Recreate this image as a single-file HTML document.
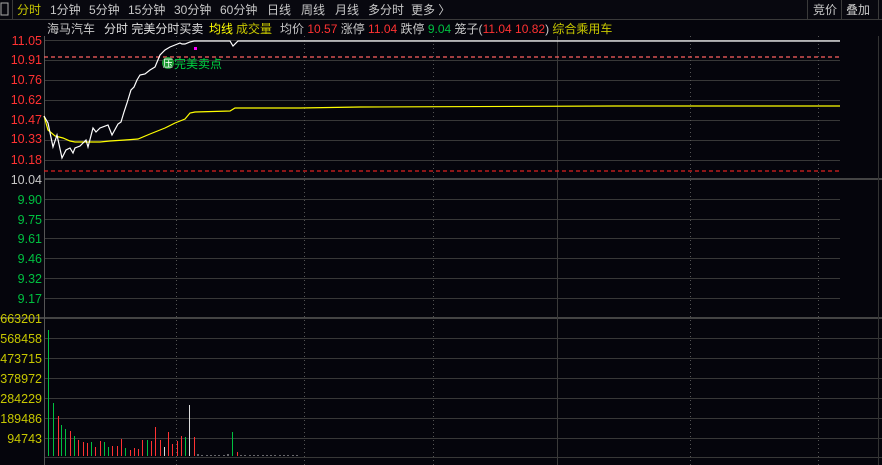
<!DOCTYPE html><html><head><meta charset="utf-8"><style>
body{margin:0;background:#05050c;width:882px;height:465px;overflow:hidden;font-family:"Liberation Sans","Noto Sans CJK SC",sans-serif;}
svg{display:block}
</style></head><body>
<svg width="882" height="465" xmlns="http://www.w3.org/2000/svg" font-family="Liberation Sans, Noto Sans CJK SC, sans-serif" font-size="12">
<rect width="882" height="465" fill="#05050c"/>
<rect x="0" y="0" width="882" height="19" fill="#08080f"/>
<line x1="0" y1="19.5" x2="882" y2="19.5" stroke="#3a3a3a"/>
<rect x="1" y="3" width="7" height="12" fill="none" stroke="#aaa"/>
<line x1="12.5" y1="0" x2="12.5" y2="19" stroke="#3a3a3a"/>
<text x="17" y="14" fill="#c8c800">分时</text>
<text x="50" y="14" fill="#c8c8c8">1分钟</text>
<text x="89" y="14" fill="#c8c8c8">5分钟</text>
<text x="128" y="14" fill="#c8c8c8">15分钟</text>
<text x="174" y="14" fill="#c8c8c8">30分钟</text>
<text x="220" y="14" fill="#c8c8c8">60分钟</text>
<text x="267" y="14" fill="#c8c8c8">日线</text>
<text x="301" y="14" fill="#c8c8c8">周线</text>
<text x="335" y="14" fill="#c8c8c8">月线</text>
<text x="368" y="14" fill="#c8c8c8">多分时</text>
<text x="411" y="14" fill="#c8c8c8">更多 〉</text>
<line x1="807.5" y1="0" x2="807.5" y2="19" stroke="#3a3a3a"/>
<line x1="841.5" y1="0" x2="841.5" y2="19" stroke="#3a3a3a"/>
<line x1="878.5" y1="0" x2="878.5" y2="19" stroke="#3a3a3a"/>
<text x="813" y="14" fill="#c8c8c8">竞价</text>
<text x="846" y="14" fill="#c8c8c8">叠加</text>
<text x="47" y="33" fill="#c8c8c8">海马汽车</text>
<text x="104" y="33" fill="#e0e0e0">分时 完美分时买卖</text>
<text x="209" y="33" fill="#ffff00">均线</text>
<text x="236" y="33" fill="#c8c800">成交量</text>
<text x="280" y="33" fill="#c8c8c8">均价 <tspan fill="#ff3232">10.57</tspan> 涨停 <tspan fill="#ff3232">11.04</tspan> 跌停 <tspan fill="#00c040">9.04</tspan> 笼子(<tspan fill="#ff3232">11.04 10.82</tspan>) <tspan fill="#c8c800">综合乘用车</tspan></text>
<g stroke="#383838">
<line x1="44" y1="60.5" x2="840" y2="60.5"/><line x1="44" y1="80.5" x2="840" y2="80.5"/><line x1="44" y1="100.5" x2="840" y2="100.5"/><line x1="44" y1="120.5" x2="840" y2="120.5"/><line x1="44" y1="140.5" x2="840" y2="140.5"/><line x1="44" y1="160.5" x2="840" y2="160.5"/>
<line x1="44" y1="199.5" x2="840" y2="199.5"/><line x1="44" y1="219.5" x2="840" y2="219.5"/><line x1="44" y1="238.5" x2="840" y2="238.5"/><line x1="44" y1="258.5" x2="840" y2="258.5"/><line x1="44" y1="278.5" x2="840" y2="278.5"/><line x1="44" y1="298.5" x2="840" y2="298.5"/>
<line x1="44" y1="338.5" x2="882" y2="338.5"/><line x1="44" y1="358.5" x2="882" y2="358.5"/><line x1="44" y1="378.5" x2="882" y2="378.5"/><line x1="44" y1="398.5" x2="882" y2="398.5"/><line x1="44" y1="418.5" x2="882" y2="418.5"/><line x1="44" y1="438.5" x2="882" y2="438.5"/><line x1="44" y1="457.5" x2="882" y2="457.5"/>
</g>
<line x1="44" y1="179" x2="882" y2="179" stroke="#444" stroke-width="2"/>
<line x1="0" y1="318" x2="882" y2="318" stroke="#444" stroke-width="2"/>
<line x1="44" y1="40.5" x2="840" y2="40.5" stroke="#383838"/>
<g stroke="#555" stroke-dasharray="1,3">
<line x1="176.5" y1="36" x2="176.5" y2="465"/><line x1="304.5" y1="36" x2="304.5" y2="465"/><line x1="433.5" y1="36" x2="433.5" y2="465"/><line x1="690.5" y1="36" x2="690.5" y2="465"/><line x1="818.5" y1="36" x2="818.5" y2="465"/>
</g>
<line x1="557.5" y1="36" x2="557.5" y2="465" stroke="#3a3a3a"/>
<line x1="44.5" y1="36" x2="44.5" y2="465" stroke="#555"/>
<line x1="878.5" y1="36" x2="878.5" y2="465" stroke="#333"/>
<line x1="44" y1="57" x2="840" y2="57" stroke="#ff6060" stroke-width="1.2" stroke-dasharray="4,3"/>
<line x1="44" y1="171" x2="840" y2="171" stroke="#dd2020" stroke-width="1.2" stroke-dasharray="4,3"/>
<g font-size="12.5" text-anchor="end">
<text x="42" y="45" fill="#ff3232">11.05</text><text x="42" y="64" fill="#ff3232">10.91</text><text x="42" y="84" fill="#ff3232">10.76</text><text x="42" y="104" fill="#ff3232">10.62</text><text x="42" y="124" fill="#ff3232">10.47</text><text x="42" y="143" fill="#ff3232">10.33</text><text x="42" y="164" fill="#ff3232">10.18</text><text x="42" y="184" fill="#c8c8c8">10.04</text>
<text x="42" y="204" fill="#00c040">9.90</text><text x="42" y="224" fill="#00c040">9.75</text><text x="42" y="243" fill="#00c040">9.61</text><text x="42" y="263" fill="#00c040">9.46</text><text x="42" y="283" fill="#00c040">9.32</text><text x="42" y="303" fill="#00c040">9.17</text>
<text x="42" y="323" fill="#c8c800">663201</text><text x="42" y="343" fill="#c8c800">568458</text><text x="42" y="363" fill="#c8c800">473715</text><text x="42" y="383" fill="#c8c800">378972</text><text x="42" y="403" fill="#c8c800">284229</text><text x="42" y="423" fill="#c8c800">189486</text><text x="42" y="443" fill="#c8c800">94743</text>
</g>
<polyline fill="none" stroke="#ffff00" stroke-width="1.2" points="44,116 48,130 55,136 63,138 70,141 75,142 100,142 110,141 125,140 138,139 150,134 165,128 175,123 185,119 190,113 195,112 230,111 235,108 300,108 360,107 615,106 840,106"/>
<polyline fill="none" stroke="#ffffff" stroke-width="1.2" points="44,116 48,123 53,147 57,135 62,158 66,150 70,148 73,153 75,148 80,146 86,140 88,147 93,128 96,132 100,128 108,125 112,135 118,124 121,122 124,112 127,103 131,90 134,87 137,80 140,75 145,74 150,70 155,67 160,55 165,50 170,47 175,45 180,43 182,44 185,44 190,42 194,41 230,41 233,46 238,41 840,41"/>
<rect x="194" y="47" width="3" height="3" fill="#ff00ff"/>
<circle cx="168" cy="63" r="6" fill="#1a9a30"/>
<text x="163" y="67" fill="#fff" font-size="10">压</text>
<text x="174" y="68" fill="#00d040">完美卖点</text>
<g stroke-width="1">
<line x1="48.5" y1="456" x2="48.5" y2="330" stroke="#00c040"/>
<line x1="53.5" y1="456" x2="53.5" y2="403" stroke="#00c040"/>
<line x1="58.5" y1="456" x2="58.5" y2="416" stroke="#ff3232"/>
<line x1="61.5" y1="456" x2="61.5" y2="425" stroke="#00c040"/>
<line x1="65.5" y1="456" x2="65.5" y2="429" stroke="#00c040"/>
<line x1="70.5" y1="456" x2="70.5" y2="431" stroke="#ff3232"/>
<line x1="74.5" y1="456" x2="74.5" y2="436" stroke="#00c040"/>
<line x1="78.5" y1="456" x2="78.5" y2="440" stroke="#ff3232"/>
<line x1="83.5" y1="456" x2="83.5" y2="442" stroke="#ff3232"/>
<line x1="87.5" y1="456" x2="87.5" y2="443" stroke="#ff3232"/>
<line x1="91.5" y1="456" x2="91.5" y2="442" stroke="#00c040"/>
<line x1="95.5" y1="456" x2="95.5" y2="447" stroke="#ff3232"/>
<line x1="100.5" y1="456" x2="100.5" y2="441" stroke="#ff3232"/>
<line x1="104.5" y1="456" x2="104.5" y2="442" stroke="#00c040"/>
<line x1="108.5" y1="456" x2="108.5" y2="447" stroke="#00c040"/>
<line x1="112.5" y1="456" x2="112.5" y2="446" stroke="#ff3232"/>
<line x1="117.5" y1="456" x2="117.5" y2="446" stroke="#ff3232"/>
<line x1="121.5" y1="456" x2="121.5" y2="439" stroke="#ff3232"/>
<line x1="125.5" y1="456" x2="125.5" y2="448" stroke="#00c040"/>
<line x1="130.5" y1="456" x2="130.5" y2="450" stroke="#ff3232"/>
<line x1="134.5" y1="456" x2="134.5" y2="448" stroke="#ff3232"/>
<line x1="138.5" y1="456" x2="138.5" y2="449" stroke="#ff3232"/>
<line x1="142.5" y1="456" x2="142.5" y2="440" stroke="#ff3232"/>
<line x1="147.5" y1="456" x2="147.5" y2="440" stroke="#00c040"/>
<line x1="151.5" y1="456" x2="151.5" y2="441" stroke="#ff3232"/>
<line x1="155.5" y1="456" x2="155.5" y2="427" stroke="#ff3232"/>
<line x1="160.5" y1="456" x2="160.5" y2="440" stroke="#ff3232"/>
<line x1="164.5" y1="456" x2="164.5" y2="447" stroke="#ddd"/>
<line x1="168.5" y1="456" x2="168.5" y2="432" stroke="#ff3232"/>
<line x1="172.5" y1="456" x2="172.5" y2="444" stroke="#ff3232"/>
<line x1="177.5" y1="456" x2="177.5" y2="441" stroke="#ff3232"/>
<line x1="181.5" y1="456" x2="181.5" y2="436" stroke="#ff3232"/>
<line x1="185.5" y1="456" x2="185.5" y2="437" stroke="#00c040"/>
<line x1="189.5" y1="456" x2="189.5" y2="405" stroke="#ddd"/>
<line x1="194.5" y1="456" x2="194.5" y2="437" stroke="#ff3232"/>
<line x1="232.5" y1="456" x2="232.5" y2="432" stroke="#00c040"/>
<line x1="237.5" y1="456" x2="237.5" y2="452" stroke="#ff3232"/>
</g>
<g stroke="#ccc">
<line x1="198" y1="456" x2="198" y2="454"/><line x1="202" y1="456" x2="202" y2="455"/><line x1="207" y1="456" x2="207" y2="455"/><line x1="211" y1="456" x2="211" y2="455"/><line x1="215" y1="456" x2="215" y2="455"/><line x1="219" y1="456" x2="219" y2="455"/><line x1="224" y1="456" x2="224" y2="455"/><line x1="228" y1="456" x2="228" y2="454"/>
<line x1="241" y1="456" x2="241" y2="455"/><line x1="245" y1="456" x2="245" y2="455"/><line x1="250" y1="456" x2="250" y2="455"/><line x1="254" y1="456" x2="254" y2="455"/><line x1="258" y1="456" x2="258" y2="455"/><line x1="263" y1="456" x2="263" y2="455"/><line x1="267" y1="456" x2="267" y2="455"/><line x1="271" y1="456" x2="271" y2="455"/><line x1="275" y1="456" x2="275" y2="455"/><line x1="280" y1="456" x2="280" y2="455"/><line x1="284" y1="456" x2="284" y2="455"/><line x1="288" y1="456" x2="288" y2="455"/><line x1="293" y1="456" x2="293" y2="455"/><line x1="297" y1="456" x2="297" y2="455"/>
</g>
</svg>
</body></html>
